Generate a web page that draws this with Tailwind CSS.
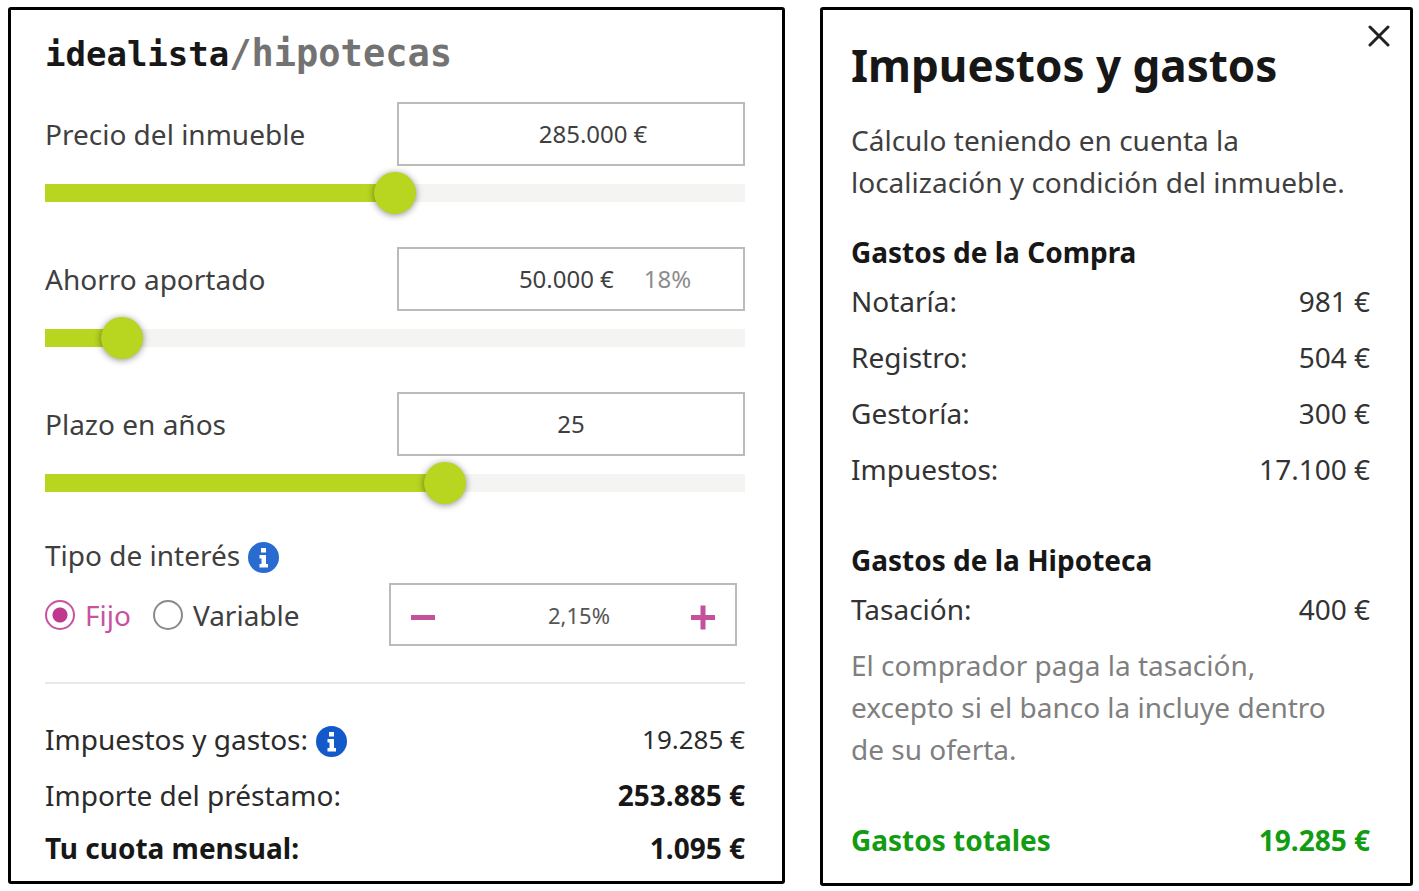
<!DOCTYPE html>
<html lang="es">

<head>
    <meta charset="UTF-8">
    <meta name="viewport" content="width=device-width, initial-scale=1.0">
    <title>Simulador | idealista/hipotecas</title>
    <script src="https://cdn.jsdelivr.net/npm/@tailwindcss/browser@4"></script>
</head>

<body class="bg-white font-['Noto_Sans','Open_Sans',sans-serif] text-[28px] leading-[42px] text-[#3f3f3f]">
    <main class="grid grid-cols-[777fr_593fr] items-start gap-[35px] pt-[7px] pl-2 pr-[6px]">

        <!-- Simulador -->
        <form class="rounded-[3px] border-3 border-black pt-5 pb-2 pl-[34px] pr-[37px]">
            <h1 class="mb-6 h-12 font-['DejaVu_Sans_Mono',monospace] text-[34px] leading-[48px] font-bold text-[#171717]">idealista<span class="text-[37px] text-[#737373]">/hipotecas</span></h1>

            <div class="mb-[45px]">
                <div class="mb-[18px] flex items-center justify-between">
                    <label for="precio">Precio del inmueble</label>
                    <div class="flex h-16 w-[348px] items-center justify-center gap-[6px] border-2 border-[#bbbcb9] pl-11 text-[24px]">
                        <input id="precio" type="text" value="285.000" class="field-sizing-content outline-none">
                        <span>€</span>
                    </div>
                </div>
                <div class="relative h-[18px] bg-[#f4f4f2]">
                    <div class="h-full bg-[#b8d51f]" style="width: 50%"></div>
                    <input type="range" aria-label="Precio del inmueble" data-for="precio" min="0" max="570000" step="1000" value="285000"
                        class="absolute -inset-x-[21px] inset-y-0 cursor-pointer appearance-none bg-transparent [&::-webkit-slider-thumb]:size-[42px] [&::-webkit-slider-thumb]:appearance-none [&::-webkit-slider-thumb]:rounded-full [&::-webkit-slider-thumb]:bg-[#b8d51f] [&::-webkit-slider-thumb]:shadow-[0_1px_7px_rgba(0,0,0,0.45)]">
                </div>
            </div>

            <div class="mb-[45px]">
                <div class="mb-[18px] flex items-center justify-between">
                    <label for="ahorro">Ahorro aportado</label>
                    <div class="flex h-16 w-[348px] items-center justify-center gap-[6px] border-2 border-[#bbbcb9] pl-17 text-[24px]">
                        <input id="ahorro" type="text" value="50.000" class="field-sizing-content outline-none">
                        <span>€</span>
                        <span class="ml-6 text-[#8c8c8c]">18%</span>
                    </div>
                </div>
                <div class="relative h-[18px] bg-[#f4f4f2]">
                    <div class="h-full bg-[#b8d51f]" style="width: 11%"></div>
                    <input type="range" aria-label="Ahorro aportado" data-for="ahorro" min="0" max="455000" step="1000" value="50000"
                        class="absolute -inset-x-[21px] inset-y-0 cursor-pointer appearance-none bg-transparent [&::-webkit-slider-thumb]:size-[42px] [&::-webkit-slider-thumb]:appearance-none [&::-webkit-slider-thumb]:rounded-full [&::-webkit-slider-thumb]:bg-[#b8d51f] [&::-webkit-slider-thumb]:shadow-[0_1px_7px_rgba(0,0,0,0.45)]">
                </div>
            </div>

            <div class="mb-[43px]">
                <div class="mb-[18px] flex items-center justify-between">
                    <label for="plazo">Plazo en años</label>
                    <div class="flex h-16 w-[348px] items-center justify-center border-2 border-[#bbbcb9] text-[24px]">
                        <input id="plazo" type="text" value="25" class="field-sizing-content outline-none">
                    </div>
                </div>
                <div class="relative h-[18px] bg-[#f4f4f2]">
                    <div class="h-full bg-[#b8d51f]" style="width: 57%"></div>
                    <input type="range" aria-label="Plazo en años" data-for="plazo" min="5" max="40" value="25"
                        class="absolute -inset-x-[21px] inset-y-0 cursor-pointer appearance-none bg-transparent [&::-webkit-slider-thumb]:size-[42px] [&::-webkit-slider-thumb]:appearance-none [&::-webkit-slider-thumb]:rounded-full [&::-webkit-slider-thumb]:bg-[#b8d51f] [&::-webkit-slider-thumb]:shadow-[0_1px_7px_rgba(0,0,0,0.45)]">
                </div>
            </div>

            <fieldset>
                <div class="mb-2 flex h-10 items-center gap-2">
                    <span>Tipo de interés</span>
                    <button type="button" aria-label="Información sobre el tipo de interés" class="mt-1">
                        <svg class="size-[31px]" viewBox="0 0 31 31">
                            <circle cx="15.5" cy="15.5" r="15.5" fill="#2a6bd0" />
                            <path fill="#fff" d="M13 6h5v4.500h-5zM11.500 13h6.500v9h2v3.500h-8.500v-3.500h2v-5.500h-2z" />
                        </svg>
                    </button>
                </div>
                <div class="flex items-center justify-between pr-2">
                    <div class="flex items-center gap-[22px]">
                        <label class="flex items-center gap-[10px] text-[#c9529f]">
                            <input type="radio" name="tipo" checked class="size-[30px] appearance-none rounded-full border-2 border-[#8a8a8a] checked:border-[#c9529f] checked:bg-[radial-gradient(circle,#bf3a8f_7px,transparent_8px)]">
                            Fijo
                        </label>
                        <label class="flex items-center gap-[10px]">
                            <input type="radio" name="tipo" class="size-[30px] appearance-none rounded-full border-2 border-[#8a8a8a] checked:border-[#c9529f] checked:bg-[radial-gradient(circle,#bf3a8f_7px,transparent_8px)]">
                            Variable
                        </label>
                    </div>
                    <div class="flex h-[63px] w-[348px] items-center border-2 border-[#bbbcb9] px-5">
                        <button type="button" aria-label="Bajar interés">
                            <svg class="size-6" viewBox="0 0 24 24"><path d="M0 14.500h24" stroke="#c4519c" stroke-width="5" /></svg>
                        </button>
                        <input type="text" aria-label="Interés" value="2,15%" class="w-full min-w-0 pl-8 text-center text-[22px] text-[#555] outline-none">
                        <button type="button" aria-label="Subir interés">
                            <svg class="size-6" viewBox="0 0 24 24" overflow="visible"><path d="M0 14.500h24M12 2.500v24" stroke="#c4519c" stroke-width="5" /></svg>
                        </button>
                    </div>
                </div>
            </fieldset>

            <hr class="mt-9 mb-[27px] border-t-2 border-[#e8e8e5]">

            <div class="flex h-14 items-center justify-between text-[#2b2b2b]">
                <div class="flex items-center gap-2">
                    <span>Impuestos y gastos:</span>
                    <button type="button" aria-label="Información sobre impuestos y gastos" class="mt-1">
                        <svg class="size-[31px]" viewBox="0 0 31 31">
                            <circle cx="15.5" cy="15.5" r="15.5" fill="#1259c9" />
                            <path fill="#fff" d="M13 6h5v4.500h-5zM11.500 13h6.500v9h2v3.500h-8.500v-3.500h2v-5.500h-2z" />
                        </svg>
                    </button>
                </div>
                <span class="text-[26px]">19.285 €</span>
            </div>
            <div class="flex h-14 items-center justify-between text-[#2b2b2b]">
                <span>Importe del préstamo:</span>
                <strong class="text-[#171717]">253.885 €</strong>
            </div>
            <div class="flex h-[50px] items-center justify-between font-bold text-[#171717]">
                <span>Tu cuota mensual:</span>
                <span>1.095 €</span>
            </div>
        </form>

        <!-- Detalle de gastos -->
        <section class="relative rounded-[3px] border-3 border-black pt-[25px] pb-[15px] pl-7 pr-10">
            <button type="button" aria-label="Cerrar" class="absolute top-[15px] right-5">
                <svg class="block size-[22px]" viewBox="0 0 22 22" fill="none" stroke="#222" stroke-width="3" stroke-linecap="round"><path d="M2 2l18 18M20 2L2 20" /></svg>
            </button>
            <h2 class="mb-6 text-[44px] leading-[60px] font-bold text-[#171717]">Impuestos y gastos</h2>
            <p class="mb-7 -mr-6">Cálculo teniendo en cuenta la<br>localización y condición del inmueble.</p>

            <h3 class="font-bold text-[#171717]">Gastos de la Compra</h3>
            <table class="mb-[42px] w-full text-[#333]">
                <tr class="h-14"><th scope="row" class="text-left font-normal">Notaría:</th><td class="text-right">981 €</td></tr>
                <tr class="h-14"><th scope="row" class="text-left font-normal">Registro:</th><td class="text-right">504 €</td></tr>
                <tr class="h-14"><th scope="row" class="text-left font-normal">Gestoría:</th><td class="text-right">300 €</td></tr>
                <tr class="h-14"><th scope="row" class="text-left font-normal">Impuestos:</th><td class="text-right">17.100 €</td></tr>
            </table>

            <h3 class="font-bold text-[#171717]">Gastos de la Hipoteca</h3>
            <table class="w-full text-[#333]">
                <tr class="h-14"><th scope="row" class="text-left font-normal">Tasación:</th><td class="text-right">400 €</td></tr>
            </table>
            <p class="mt-[7px] mb-[42px] text-[#7f7f7f]">El comprador paga la tasación,<br>excepto si el banco la incluye dentro<br>de su oferta.</p>

            <div class="flex h-14 items-center justify-between font-bold text-[#129c12]">
                <span>Gastos totales</span>
                <span>19.285 €</span>
            </div>
        </section>
    </main>

    <script>
        document.querySelectorAll('input[type=range]').forEach(range => {
            range.addEventListener('input', function () {
                const percent = (range.value - range.min) / (range.max - range.min) * 100;
                range.previousElementSibling.style.width = percent + '%';
                document.getElementById(range.dataset.for).value = Number(range.value).toLocaleString('es-ES');
            });
        });
    </script>
</body>

</html>
